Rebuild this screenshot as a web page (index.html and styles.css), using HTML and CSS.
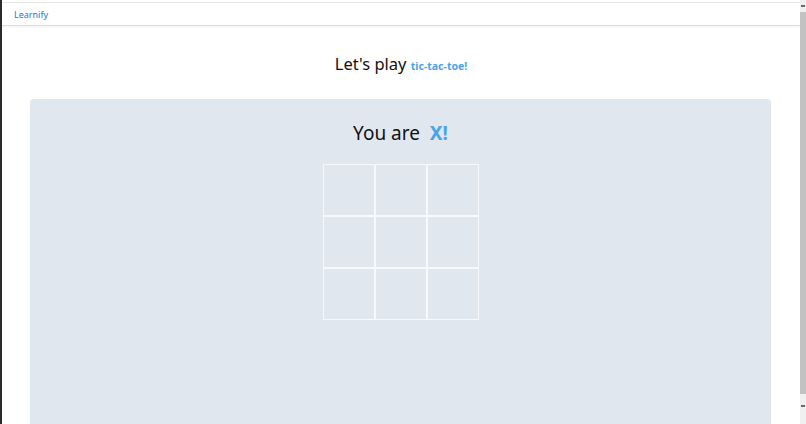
FILE: index.html
```html
<!DOCTYPE html>
<html lang="en">
  <head>
    <meta charset="UTF-8" />
    <meta name="viewport" content="width=device-width, initial-scale=1.0" />
    <title>Learnify - tic-tac-toe</title>
    <link rel="stylesheet" href="styles.css">
  </head>
  <body>
    <div class="edge"></div>
    <div class="page">
      <nav class="navbar">
        <a class="brand">Learnify</a>
      </nav>

      <h1 class="title">Let's play <span class="game-name">tic-tac-toe!</span></h1>

      <div class="board-panel">
        <h2 class="player">You are&nbsp; <span class="mark">X!</span></h2>
        <div class="board">
          <div class="cell"></div>
          <div class="cell"></div>
          <div class="cell"></div>
          <div class="cell"></div>
          <div class="cell"></div>
          <div class="cell"></div>
          <div class="cell"></div>
          <div class="cell"></div>
          <div class="cell"></div>
        </div>
      </div>
    </div>
    <div class="scrollbar">
      <div class="arrow"></div>
      <div class="thumb"></div>
      <div class="arrow"></div>
    </div>
  </body>
</html>
```

FILE: styles.css
```css
body {
  font-family: "Noto Sans", "Open Sans", sans-serif;
  background-color: #fff;
  margin: 0;
  padding: 0;
  display: flex;
  height: 424px;
  overflow: hidden;
}
.edge {
  width: 2px;
  background-color: #2b2b2b;
  flex-shrink: 0;
}
.page {
  flex: 1;
  padding-top: 2px;
  min-width: 0;
}
.navbar {
  height: 22px;
  border-top: 1px solid #e6e6e6;
  border-bottom: 1px solid #dcdcdc;
  box-shadow: 0 1px 2px rgba(0, 0, 0, 0.05);
  display: flex;
  align-items: center;
  padding-left: 12px;
}
.brand {
  font-size: 9px;
  color: #1f76d2;
}
.title {
  text-align: center;
  font-size: 16.5px;
  font-weight: 400;
  line-height: 24px;
  color: #111;
  margin: 26px 0 21px;
}
.game-name {
  font-size: 10.5px;
  font-weight: 700;
  color: #4aa3ea;
}
.board-panel {
  background-color: #e1e7ef;
  border-radius: 4px;
  margin: 0 29px 0 28px;
  padding-top: 21px;
  min-height: 400px;
}
.player {
  text-align: center;
  font-size: 19px;
  font-weight: 400;
  line-height: 26px;
  color: #111;
  margin: 0 0 18px;
}
.mark {
  font-weight: 700;
  color: #4aa3ea;
}
.board {
  display: grid;
  grid-template-columns: repeat(3, 52px);
  grid-template-rows: repeat(3, 52px);
  width: 156px;
  margin: 0 auto;
}
.cell {
  border: 1px solid #f6f8fb;
}
.scrollbar {
  flex: 0 0 6px;
  background-color: #f0f0f0;
}
.arrow {
  height: 12px;
  display: flex;
  align-items: center;
  justify-content: center;
}
.arrow::after {
  content: "";
  width: 4px;
  height: 2px;
  background-color: #6a6a6a;
}
.thumb {
  height: 382px;
  background-color: #c2c2c2;
  margin-bottom: 6px;
}
```
